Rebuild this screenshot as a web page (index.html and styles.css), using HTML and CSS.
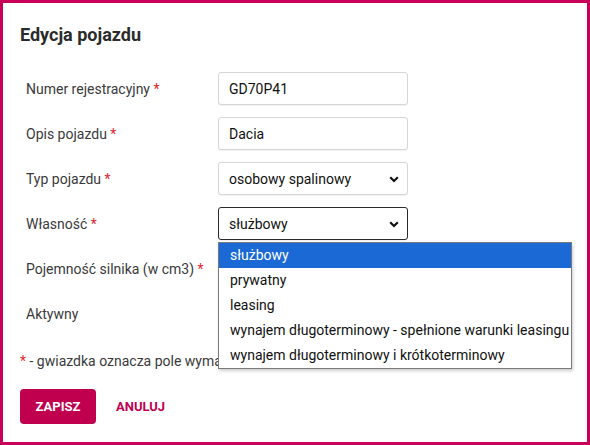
FILE: index.html
```html
<!DOCTYPE html>
<html lang="pl">
<head>
<meta charset="utf-8">
<title>Edycja pojazdu</title>
<link rel="stylesheet" href="styles.css">
</head>
<body>
<div class="dialog">
  <h1 class="title">Edycja pojazdu</h1>
  <form class="form">
    <div class="row">
      <label class="label">Numer rejestracyjny <span class="req">*</span></label>
      <input class="field" type="text" value="GD70P41">
    </div>
    <div class="row">
      <label class="label">Opis pojazdu <span class="req">*</span></label>
      <input class="field" type="text" value="Dacia">
    </div>
    <div class="row">
      <label class="label">Typ pojazdu <span class="req">*</span></label>
      <div class="select-wrap">
        <div class="field select">osobowy spalinowy</div>
        <svg class="chev" width="10" height="7" viewBox="0 0 10 7"><path d="M1.2 1.3 L5 5 L8.8 1.3" fill="none" stroke="#111" stroke-width="2.2"/></svg>
      </div>
    </div>
    <div class="row">
      <label class="label">Własność <span class="req">*</span></label>
      <div class="select-wrap">
        <div class="field select focused">służbowy</div>
        <svg class="chev" width="10" height="7" viewBox="0 0 10 7"><path d="M1.2 1.3 L5 5 L8.8 1.3" fill="none" stroke="#111" stroke-width="2.2"/></svg>
        <ul class="menu">
          <li class="opt selected">służbowy</li>
          <li class="opt">prywatny</li>
          <li class="opt">leasing</li>
          <li class="opt">wynajem długoterminowy - spełnione warunki leasingu</li>
          <li class="opt">wynajem długoterminowy i krótkoterminowy</li>
        </ul>
      </div>
    </div>
    <div class="row">
      <label class="label">Pojemność silnika (w cm3) <span class="req">*</span></label>
      <input class="field" type="text" value="">
    </div>
    <div class="row">
      <label class="label">Aktywny</label>
      <div></div>
    </div>
  </form>
  <p class="note"><span class="req">*</span> - gwiazdka oznacza pole wymagane</p>
  <div class="actions">
    <button class="btn primary" type="button">ZAPISZ</button>
    <button class="btn link" type="button">ANULUJ</button>
  </div>
</div>
</body>
</html>
```

FILE: styles.css
```css
* { box-sizing: border-box; }
html, body { margin: 0; padding: 0; background: #fff; }
body { font-family: Roboto, "Noto Sans", sans-serif; color: #333; }

.dialog {
  width: 590px;
  height: 445px;
  border: 3px solid #c8005a;
  padding: 20px 17px 0 17px;
  overflow: hidden;
}

.title {
  margin: 0;
  font-size: 18px;
  line-height: 24px;
  font-weight: 700;
  color: #2b2b2b;
}

.form {
  margin-top: 25px;
  padding-left: 6px;
  display: flex;
  flex-direction: column;
  gap: 12px;
}

.row {
  display: grid;
  grid-template-columns: 192px 190px;
  align-items: center;
  height: 33px;
}

.label {
  font-size: 14px;
  color: #3a3a3a;
}

.req { color: #e0262b; }

.field {
  width: 190px;
  height: 33px;
  border: 1px solid #d6d6d6;
  border-radius: 3px;
  padding: 0 10px;
  font-family: Roboto, "Noto Sans", sans-serif;
  font-size: 14px;
  color: #111;
  background: #fff;
  box-shadow: 0 1px 1px rgba(0,0,0,0.06);
  outline: none;
}

.select-wrap { position: relative; width: 190px; height: 33px; }
.select {
  display: flex;
  align-items: center;
}
.select.focused {
  border: 1px solid #2a2a2a;
}
.chev {
  position: absolute;
  right: 9px;
  top: 14px;
}

.menu {
  position: absolute;
  left: 0;
  top: 35px;
  width: 354px;
  margin: 0;
  padding: 0;
  list-style: none;
  background: #fff;
  border: 1px solid #7a7a7a;
  box-shadow: 1px 2px 3px rgba(0,0,0,0.2);
  z-index: 5;
}
.opt {
  height: 25px;
  line-height: 25px;
  padding-left: 11px;
  font-size: 14px;
  color: #111;
  white-space: nowrap;
}
.opt.selected {
  background: #1a69d4;
  color: #fff;
}

.note {
  margin: 21px 0 0 0;
  font-size: 14px;
  line-height: 20px;
  color: #3a3a3a;
}

.actions {
  margin-top: 18px;
  display: flex;
  align-items: center;
  gap: 20px;
}
.btn {
  font-family: Roboto, "Noto Sans", sans-serif;
  font-weight: 700;
  font-size: 13px;
  border: none;
  cursor: pointer;
}
.btn.primary {
  width: 76px;
  height: 35px;
  background: #c0004f;
  color: #fff;
  border-radius: 4px;
}
.btn.link {
  background: none;
  padding: 0;
  color: #c0004f;
}
```
